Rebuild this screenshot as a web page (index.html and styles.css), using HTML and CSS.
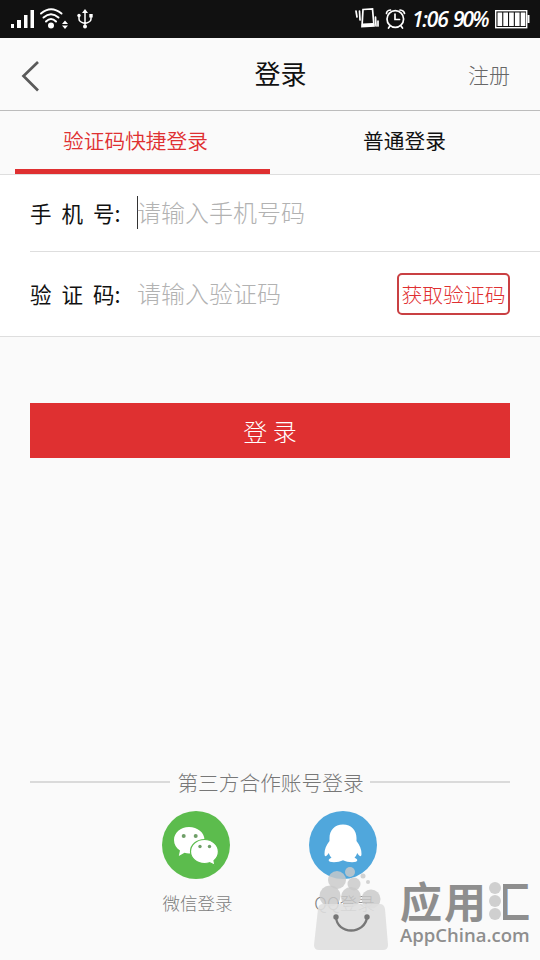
FILE: index.html
```html
<!DOCTYPE html>
<html lang="zh-CN">
<head>
<meta charset="utf-8">
<title>登录</title>
<link rel="stylesheet" href="styles.css">
</head>
<body>
<div class="screen">
  <div class="status">
    <svg class="status-left" width="100" height="38" viewBox="0 0 100 38" fill="#fff">
      <path d="M11 24h3v4h-3zM17 20h4v8h-4zM24 15h3.500v13H24zM30.500 10H34v18h-3.500z"/>
      <circle cx="51" cy="25.500" r="3"/>
      <g fill="none" stroke="#fff" stroke-width="2" stroke-linecap="round">
        <path d="M41 13.500Q51 5 61.500 13.500M43.500 17.500Q51 11 58.500 17.500M46 21.500Q51 16.500 56 21.500"/>
        <path d="M85 12v14M79 16v3q0 3 6 4.500M91 16v3q0 3-6 4.500" stroke-width="1.500"/>
      </g>
      <path d="M62 24l3-3.500 3 3.500zM62 25.500h6l-3 3.500zM82 13L85 9l3 4zM89.300 14h3.400v3.400h-3.400z"/>
      <circle cx="79" cy="15.500" r="1.700"/><circle cx="85" cy="26.500" r="2"/>
    </svg>
    <div class="status-right">
      <svg width="54" height="38" viewBox="354 0 54 38" fill="none" stroke="#fff" stroke-width="1.700" stroke-linecap="round">
        <path d="M363 9.500l9.500-.5 1.500 17-12 .5zM356 11l1 6M359.500 11l.5 9M375.500 17l.5 9M378 21v5"/>
        <path d="M363 25l10-.5" stroke-width="2.800"/>
        <circle cx="395.300" cy="19" r="8.300"/>
        <path d="M395 14v5.500h4.500M386.500 13.500q0-3 4-3.500M400 10q4 .5 4.500 3.500M390 26l-1.500 2M401 26l1.500 2"/>
      </svg>
      <span class="clock">1:06</span>
      <span class="percent">90%</span>
      <svg width="36" height="38" viewBox="494 0 36 38">
        <rect x="495.700" y="10.700" width="31" height="17" fill="none" stroke="#fff" stroke-width="1.400"/>
        <path d="M527.500 15h2v8h-2z" fill="#fff"/>
        <path d="M497.500 12.500h4.700v13.500h-4.700zM503.300 12.500h4.700v13.500h-4.700zM509.100 12.500h4.700v13.500h-4.700zM514.900 12.500h4.700v13.500h-4.700zM520.700 12.500h4.700v13.500h-4.700z" fill="#fff"/>
      </svg>
    </div>
  </div>

  <header class="header">
    <svg class="back" width="22" height="34" viewBox="0 0 22 34"><path d="M18 3L3.500 17 18 31.500" fill="none" stroke="#5a5a5a" stroke-width="2.700"/></svg>
    <h1 class="title">登录</h1>
    <a class="register">注册</a>
  </header>

  <nav class="tabs">
    <a class="tab active">验证码快捷登录</a>
    <a class="tab">普通登录</a>
  </nav>

  <div class="form">
    <div class="row phone">
      <span class="label"><span>手</span><span>机</span><span>号:</span></span>
      <span class="caret"></span>
      <span class="placeholder">请输入手机号码</span>
    </div>
    <div class="row code">
      <span class="label"><span>验</span><span>证</span><span>码:</span></span>
      <span class="placeholder">请输入验证码</span>
      <button class="get-code">获取验证码</button>
    </div>
  </div>

  <button class="submit">登 录</button>

  <div class="third"><span>第三方合作账号登录</span></div>
  <div class="accounts">
    <div class="account">
      <svg width="68" height="68" viewBox="0 0 68 68">
        <circle cx="34" cy="34" r="34" fill="#5cbc4d"/>
        <path d="M27 16c-8.500 0-15 5.700-15 13 0 4.500 2.300 8 6 10.500l-1.200 5.500 5.700-3.200c1.500.5 3 .7 4.500.7 9 0 15.500-6 15.500-13.500S35.500 16 27 16z" fill="#fff"/>
        <path d="M42.500 28.500c-7.800 0-14 5.300-14 12s6 12 14 12c2 0 3.500-.3 5-.8l5.500 2.700-1-4.700c2.800-2.200 4.400-5.400 4.400-9.200 0-6.700-6.200-12-13.900-12z" fill="#fff" stroke="#5cbc4d" stroke-width="1.200"/>
        <g fill="#6f9f68"><circle cx="21.700" cy="25" r="2"/><circle cx="33.700" cy="25" r="2"/><circle cx="38" cy="35.500" r="1.700"/><circle cx="47.500" cy="35.500" r="1.700"/></g>
      </svg>
      <span>微信登录</span>
    </div>
    <div class="account">
      <svg width="68" height="68" viewBox="0 0 68 68">
        <circle cx="34" cy="34" r="34" fill="#50a7dc"/>
        <path d="M34 13.500c-8.500 0-13.500 6-13.500 13.500v3c-3 4-5.300 8.500-5 13 .2 3.200 1.500 3 4.300-1 .7 2 1.500 3.500 2.700 4.700-3 1-3.700 3-1.500 4 3 1 9.500.5 13-1.500 3.500 2 10 2.500 13 1.500 2.200-1 1.500-3-1.500-4 1.200-1.200 2-2.700 2.700-4.700 2.800 4 4.100 4.200 4.300 1 .3-4.500-2-9-5-13v-3C47.500 19.500 42.500 13.500 34 13.500z" fill="#fff"/>
      </svg>
      <span>QQ登录</span>
    </div>
  </div>

  <div class="watermark">
    <svg class="bag" width="78" height="86" viewBox="312 865 78 86">
      <g fill="#c9c9c9" fill-opacity=".82">
        <circle cx="350" cy="872" r="5"/><circle cx="337" cy="880" r="9"/><circle cx="354" cy="884" r="6.500"/><circle cx="363" cy="876" r="2.500"/><circle cx="368" cy="882" r="2"/>
        <circle cx="330" cy="896" r="10.500"/><circle cx="351" cy="897" r="10"/><circle cx="371" cy="899" r="9.500"/>
      </g>
      <path d="M323 904h57q4 0 5 5l3 36q0 5-5 5h-64q-5 0-5-5l4-36q.5-5 5-5z" fill="#dfdfdf" fill-opacity=".9"/>
      <path d="M336 917c1 18 29 18 31 0" fill="none" stroke="#777" stroke-width="2.300"/>
      <circle cx="336" cy="917" r="2.700" fill="#777"/><circle cx="367" cy="917" r="2.700" fill="#777"/>
    </svg>
    <div class="brand">
      <div class="brand-name"><span>应</span><span>用</span><span class="hui">汇</span>
        <svg class="drops" width="14" height="40" viewBox="0 0 14 40" fill="#cfcfcf"><circle cx="7" cy="7" r="6"/><circle cx="7" cy="20" r="6"/><circle cx="7" cy="33" r="6"/></svg>
      </div>
      <div class="brand-url">AppChina.com</div>
    </div>
  </div>
</div>
</body>
</html>
```
FILE: styles.css
```css
* { box-sizing: border-box; }
body {
  margin: 0;
  font-family: "Noto Sans CJK SC", sans-serif;
  font-weight: 300;
  color: #111;
  background: #fafafa;
}
button { font: inherit; padding: 0; }
svg { display: block; flex: none; }
.screen {
  position: relative;
  width: 540px;
  height: 960px;
  overflow: hidden;
  background: #fafafa;
}
.status {
  height: 38px;
  display: flex;
  justify-content: space-between;
  background: #111;
  color: #fff;
}
.status-right {
  display: flex;
  align-items: center;
  padding-right: 10px;
  font: italic 600 21px/40px "Open Sans", sans-serif;
  white-space: nowrap;
}
.clock { width: 45px; padding-left: 4px; letter-spacing: -1.200px; }
.percent { width: 41px; letter-spacing: -2px; }
.header {
  height: 73px;
  display: grid;
  grid-template-columns: 90px 1fr 90px;
  align-items: center;
  border-bottom: 1px solid #bcbcbc;
}
.back { margin: 3px 0 0 20px; }
.title {
  margin: 0 0 3px;
  padding-left: 21px;
  font-size: 26px;
  line-height: 38px;
  font-weight: 400;
  text-align: center;
}
.register {
  padding-right: 30px;
  text-align: right;
  font-size: 21px;
  color: #666;
}
.tabs {
  height: 64px;
  padding: 0 15px;
  display: flex;
  border-bottom: 1px solid #dedede;
}
.tab {
  flex: 0 0 255px;
  padding-left: 14px;
  text-align: center;
  font-size: 20.7px;
  line-height: 59px;
  font-weight: 400;
}
.tab.active {
  height: 63px;
  padding: 0 14px 0 0;
  font-weight: 350;
  color: #df3031;
  border-bottom: 5px solid #df3031;
}
.form {
  background: #fff;
  border-bottom: 1px solid #dedede;
}
.row {
  margin-left: 30px;
  padding-right: 30px;
  display: flex;
  align-items: center;
}
.phone { height: 77px; border-bottom: 1px solid #dedede; }
.code { height: 84px; }
.label {
  width: 107px;
  padding-bottom: 2px;
  display: flex;
  gap: 10px;
  font-size: 21.500px;
  font-weight: 400;
  white-space: nowrap;
}
.caret { width: 1px; height: 33px; margin: 0 -1px 2px 0; background: #333; }
.placeholder { padding-bottom: 3px; font-size: 24px; color: #b2b2b2; }
.get-code {
  width: 113px;
  height: 42px;
  margin-left: auto;
  border: 2px solid #c94043;
  border-radius: 5px;
  background: #fff;
  color: #df3031;
  font-size: 20.800px;
  white-space: nowrap;
}
.submit {
  display: block;
  width: 480px;
  height: 55px;
  margin: 66px 30px 0;
  border: 0;
  background: #df3031;
  color: #fff;
  font-size: 24px;
}
.third {
  height: 32px;
  margin: 308px 30px 0;
  display: flex;
  align-items: center;
  font-size: 20.700px;
  color: #777;
}
.third::before, .third::after {
  content: "";
  flex: 1;
  height: 2px;
  background: #dadada;
}
.third span { padding: 0 6px 0 7px; }
.accounts {
  padding: 13px 1px 0 0;
  display: flex;
  justify-content: center;
  gap: 67px;
}
.account {
  width: 80px;
  display: flex;
  flex-direction: column;
  align-items: center;
  font-size: 17.500px;
  line-height: 26px;
  color: #7c7c7c;
}
.account span { margin-top: 11px; padding-left: 3px; }
.watermark {
  position: absolute;
  left: 312px;
  top: 865px;
  display: flex;
  color: #8e8e8e;
}
.brand { padding: 11px 0 0 10px; width: 134px; }
.brand-name {
  position: relative;
  display: flex;
  gap: 2px;
  font-size: 42px;
  line-height: 48px;
  height: 47px;
  font-weight: 700;
}
.hui { clip-path: inset(0 0 0 15px); }
.drops { position: absolute; left: 88px; top: 5px; }
.brand-url {
  font: 600 18.500px/24px "Open Sans", sans-serif;
  white-space: nowrap;
}
```
